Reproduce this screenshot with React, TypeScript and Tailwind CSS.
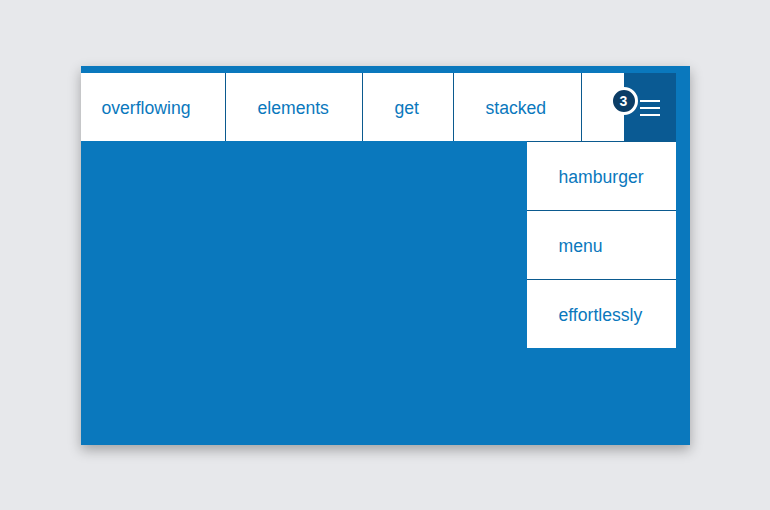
import React from "react";

const navItems = [
  { label: "overflowing", w: "w-[144px]", pl: "pl-[21px]" },
  { label: "elements", w: "w-[137px]", pl: "pl-[32px]" },
  { label: "get", w: "w-[91px]", pl: "pl-[32px]" },
  { label: "stacked", w: "w-[128px]", pl: "pl-[32px]" },
];

const hidden = ["hamburger", "menu", "effortlessly"];

export default function App() {
  return (
    <div
      className="flex h-[510px] w-[770px] items-start justify-center bg-[#e7e8eb] pt-[66px]"
      style={{ fontFamily: '"Liberation Sans", Arial, sans-serif' }}
    >
      <div className="relative h-[379px] w-[609px] bg-[#0a78bd] pr-[14px] pt-[7px] shadow-[0_5px_12px_rgba(0,0,0,0.3)]">
        <nav className="relative flex h-[68px] bg-white">
          {navItems.map((item, i) => (
            <div
              key={item.label}
              className={`flex h-full items-center pt-[2px] ${item.w} ${item.pl} text-[17.6px] text-[#0a78bd] ${
                i > 0 ? "border-l border-[#0b5a8f]" : ""
              }`}
            >
              {item.label}
            </div>
          ))}
          <div className="h-full w-[43px] border-l border-[#0b5a8f]" />
          <button className="relative flex h-full w-[52px] items-center justify-center bg-[#0a5a93] pt-[1px]">
            <span className="absolute left-[-14px] top-[14px] flex h-[28px] w-[28px] items-center justify-center rounded-full border-[3px] border-white bg-[#0b3d66] text-[14px] font-bold text-white">
              3
            </span>
            <span className="flex flex-col gap-[5px]">
              <span className="block h-[2px] w-[20px] bg-white" />
              <span className="block h-[2px] w-[20px] bg-white" />
              <span className="block h-[2px] w-[20px] bg-white" />
            </span>
          </button>

          <ul className="absolute right-0 top-[68px] w-[149px] bg-white">
            {hidden.map((h) => (
              <li
                key={h}
                className="flex h-[69px] items-center border-t border-[#0b5a8f] pl-[32px] pt-[2px] text-[17.6px] text-[#0a78bd]"
              >
                {h}
              </li>
            ))}
          </ul>
        </nav>
      </div>
    </div>
  );
}
